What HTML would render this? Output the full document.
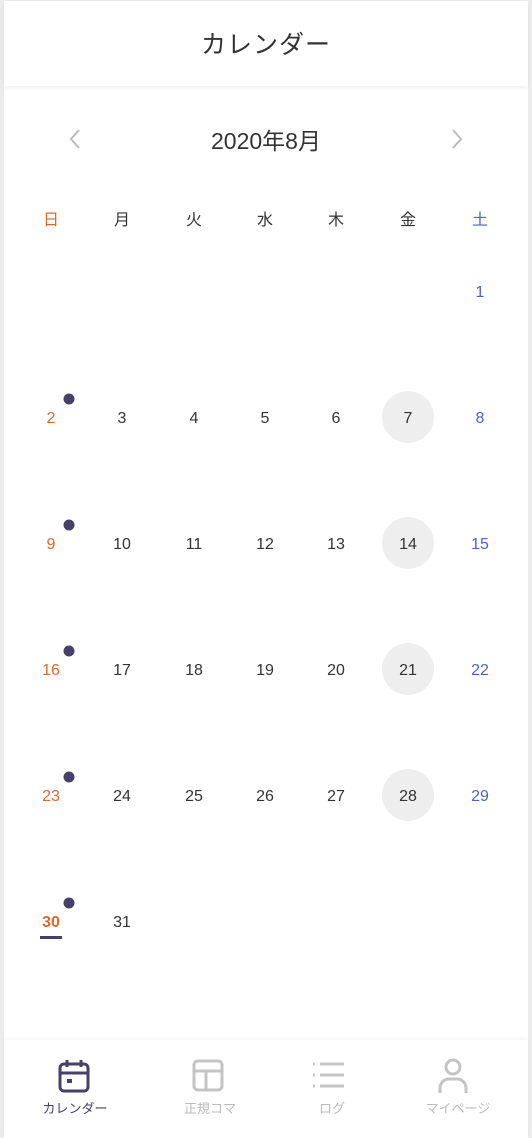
<!DOCTYPE html><html><head><meta charset="utf-8"><style>
*{margin:0;padding:0;box-sizing:border-box}
body{width:532px;height:1138px;background:#ececec;font-family:"Liberation Sans","Noto Sans CJK JP",sans-serif;position:relative;overflow:hidden}
.frame{position:absolute;left:4px;top:1px;width:524px;height:1137px;background:#fff}
.hdr{position:absolute;left:4px;top:1px;width:524px;height:85px;background:#fff;box-shadow:0 2px 4px rgba(0,0,0,.06);text-align:center;line-height:88px;font-size:25px;color:#333;letter-spacing:1px}
.t{position:absolute;transform:translate(-50%,-50%);font-size:16px;color:#333;white-space:nowrap;margin-top:2px}
.s{color:#d9692e}.a{color:#4a66c0}
.c{position:absolute;width:52px;height:52px;border-radius:50%;background:#eeeeee;transform:translate(-50%,-50%)}
.d{position:absolute;width:11px;height:11px;border-radius:50%;background:#47416a;transform:translate(-50%,-50%)}
.tab{position:absolute;left:4px;top:1040px;width:524px;height:98px;background:#fff;box-shadow:0 -2px 4px rgba(0,0,0,.04)}
.lb{position:absolute;transform:translateX(-50%);top:1098px;font-size:13px;color:#bbb;white-space:nowrap}
</style></head><body>
<div class="frame"></div>
<div class="hdr">カレンダー</div>
<svg style="position:absolute;left:68px;top:128px" width="14" height="22"><path d="M11 2L3 11l8 9" fill="none" stroke="#bbb" stroke-width="2"/></svg>
<svg style="position:absolute;left:450px;top:128px" width="14" height="22"><path d="M3 2l8 9-8 9" fill="none" stroke="#bbb" stroke-width="2"/></svg>
<div class="t" style="left:266px;top:137px;font-size:23px">2020年8月</div>
<div class="t s" style="left:51px;top:216px">日</div><div class="t" style="left:122px;top:216px">月</div><div class="t" style="left:194px;top:216px">火</div><div class="t" style="left:265px;top:216px">水</div><div class="t" style="left:336px;top:216px">木</div><div class="t" style="left:408px;top:216px">金</div><div class="t a" style="left:480px;top:216px">土</div>
<div class="t a" style="left:480px;top:291px">1</div>
<div class="c" style="left:408px;top:417px"></div><div class="c" style="left:408px;top:543px"></div><div class="c" style="left:408px;top:669px"></div><div class="c" style="left:408px;top:795px"></div>
<div class="d" style="left:69px;top:399px"></div><div class="d" style="left:69px;top:525px"></div><div class="d" style="left:69px;top:651px"></div><div class="d" style="left:69px;top:777px"></div><div class="d" style="left:69px;top:903px"></div>
<div class="t s" style="left:51px;top:417px">2</div><div class="t" style="left:122px;top:417px">3</div><div class="t" style="left:194px;top:417px">4</div><div class="t" style="left:265px;top:417px">5</div><div class="t" style="left:336px;top:417px">6</div><div class="t" style="left:408px;top:417px">7</div><div class="t a" style="left:480px;top:417px">8</div>
<div class="t s" style="left:51px;top:543px">9</div><div class="t" style="left:122px;top:543px">10</div><div class="t" style="left:194px;top:543px">11</div><div class="t" style="left:265px;top:543px">12</div><div class="t" style="left:336px;top:543px">13</div><div class="t" style="left:408px;top:543px">14</div><div class="t a" style="left:480px;top:543px">15</div>
<div class="t s" style="left:51px;top:669px">16</div><div class="t" style="left:122px;top:669px">17</div><div class="t" style="left:194px;top:669px">18</div><div class="t" style="left:265px;top:669px">19</div><div class="t" style="left:336px;top:669px">20</div><div class="t" style="left:408px;top:669px">21</div><div class="t a" style="left:480px;top:669px">22</div>
<div class="t s" style="left:51px;top:795px">23</div><div class="t" style="left:122px;top:795px">24</div><div class="t" style="left:194px;top:795px">25</div><div class="t" style="left:265px;top:795px">26</div><div class="t" style="left:336px;top:795px">27</div><div class="t" style="left:408px;top:795px">28</div><div class="t a" style="left:480px;top:795px">29</div>
<div class="t s" style="left:51px;top:921px;font-weight:bold">30</div><div class="t" style="left:122px;top:921px">31</div>
<div style="position:absolute;left:40px;top:936px;width:22px;height:3px;background:#47416a"></div>
<div class="tab"></div>
<svg style="position:absolute;left:58px;top:1058px" width="34" height="36" fill="none" stroke="#47416a" stroke-width="3"><rect x="2" y="6" width="28" height="27" rx="4"/><path d="M2 15h28M9 2v7M23 2v7"/><rect x="9" y="21" width="5" height="4" fill="#47416a" stroke="none"/></svg>
<svg style="position:absolute;left:192px;top:1059px" width="34" height="34" fill="none" stroke="#c4c4c4" stroke-width="3"><rect x="2" y="2" width="28" height="29" rx="4"/><path d="M2 12h28M14 12v19"/></svg>
<svg style="position:absolute;left:308px;top:1060px" width="38" height="32" fill="none" stroke="#c4c4c4" stroke-width="3"><path d="M12 4h24M12 15h24M12 26h24M5 4h2M5 15h2M5 26h2"/></svg>
<svg style="position:absolute;left:436px;top:1058px" width="34" height="36" fill="none" stroke="#c4c4c4" stroke-width="3"><circle cx="17" cy="9" r="7"/><path d="M4 35v-5a9 9 0 0 1 9-9h8a9 9 0 0 1 9 9v5"/></svg>
<div class="lb" style="left:75px;color:#47416a">カレンダー</div>
<div class="lb" style="left:210px">正規コマ</div>
<div class="lb" style="left:332px">ログ</div>
<div class="lb" style="left:458px">マイページ</div>
</body></html>
